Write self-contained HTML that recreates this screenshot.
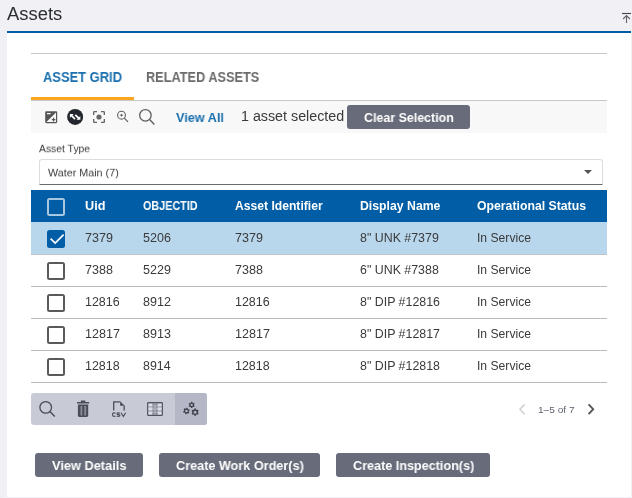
<!DOCTYPE html>
<html>
<head>
<meta charset="utf-8">
<title>Assets</title>
<style>
*{box-sizing:border-box;margin:0;padding:0}
html,body{width:632px;height:498px;overflow:hidden}
body{background:#f1f0f5;font-family:"Liberation Sans",sans-serif;color:#333;position:relative}
.a{position:absolute;white-space:nowrap}
.t{position:absolute;white-space:nowrap;line-height:20px;transform-origin:0 0;will-change:transform}
.b{font-weight:bold}
.blue{left:7px;top:31px;width:624px;height:2px;background:#005da6}
.panel{left:7px;top:33px;width:624px;height:464px;background:#fff}
.hr1{left:31px;top:53px;width:576px;height:1px;background:#c8c8c8}
.orange{left:31px;top:97px;width:103px;height:3px;background:#f8a521}
.hr2{left:31px;top:100px;width:576px;height:1px;background:#c8c8c8}
.tbar{left:31px;top:101px;width:576px;height:32px;background:#f8f8f8}
.btn{background:#686c7a;height:24px;border-radius:3px}
.select{left:39px;top:159px;width:564px;height:26px;border:1px solid #dcdcdc;border-bottom:1px solid #6b6b6b;border-radius:3px 3px 1px 1px;background:#fff}
.thead{left:31px;top:190px;width:576px;height:32px;background:#005da6}
.row{left:31px;width:576px;height:1px;background:#b9b9b9}
.rsel{left:31px;top:222px;width:576px;height:32px;background:#b8d6ec}
.cb{width:18px;height:18px;border:2px solid #5a5a5a;border-radius:2.5px;background:#fff;left:47px}
.tools{left:31px;top:393px;width:176px;height:32px;background:#c8cad6;border-radius:3px}
.tools2{left:175px;top:393px;width:32px;height:32px;background:#b5b7c6;border-radius:0 3px 3px 0}

</style>
</head>
<body>
<div class="a blue"></div>
<div class="a panel"></div>
<div class="a hr1"></div>
<div class="a hr2"></div>
<div class="a orange"></div>
<div class="a tbar"></div>
<svg class="a" style="left:618px;top:10px" width="14" height="16" viewBox="618 10 14 16"><path d="M622 13.5H631" stroke="#444" stroke-width="1.1" fill="none"/><path d="M626.5 23V15.6M623.1 19L626.5 15.6L629.9 19" stroke="#666" stroke-width="1.1" fill="none"/></svg>
<div class="a btn" style="left:347px;top:105px;width:123px"></div>
<div class="a btn" style="left:35px;top:453px;width:108px"></div>
<div class="a btn" style="left:159px;top:453px;width:161px"></div>
<div class="a btn" style="left:336px;top:453px;width:154px"></div>
<div class="a select"></div>
<svg class="a" style="left:582px;top:168px" width="12" height="8" viewBox="582 168 12 8"><path d="M584 170H592L588 174Z" fill="#555"/></svg>
<div class="a thead"></div>
<div class="a rsel"></div>
<div class="a row" style="top:254px;background:#c5c3c5"></div>
<div class="a row" style="top:286px;background:#bbbbbb"></div>
<div class="a row" style="top:318px;background:#bbbbbb"></div>
<div class="a row" style="top:350px;background:#bbbbbb"></div>
<div class="a row" style="top:382px;background:#bbbbbb"></div>
<div class="a cb" style="top:198px;border-color:#a8c8e2;background:transparent"></div>
<div class="a cb" style="top:230px;background:#005da6;border-color:#005da6"></div>
<svg class="a" style="left:47px;top:230px" width="18" height="18" viewBox="0 0 18 18"><path d="M3.6 8.6L8.2 13.1L16.6 4.6" stroke="#fff" stroke-width="1.65" fill="none"/></svg>
<div class="a cb" style="top:262px"></div>
<div class="a cb" style="top:294px"></div>
<div class="a cb" style="top:326px"></div>
<div class="a cb" style="top:358px"></div>
<div class="a tools"></div>
<div class="a tools2"></div>
<svg class="a" style="left:43.8px;top:109.8px" width="14.4" height="14.4" viewBox="0 0 24 24"><path fill="#555" d="M15 17v2h2v-2h2v-2h-2v-2h-2v2h-2v2h2zm5-15H4c-1.1 0-2 .9-2 2v16c0 1.1.9 2 2 2h16c1.1 0 2-.9 2-2V4c0-1.1-.9-2-2-2zM5 5h6v2H5V5zm15 15H4L20 4v16z"/></svg>
<svg class="a" style="left:66px;top:108px" width="18" height="18" viewBox="66 108 18 18"><circle cx="75.15" cy="116.9" r="8" fill="#23272d"/><path d="M69.9 114.1H73.7L72.5 115.3L75.6 118.4L74.3 119.7L71.2 116.6L69.9 117.9Z" fill="#fff"/><path d="M80.3 119.8H76.5L77.7 118.6L74.6 115.5L75.9 114.2L79 117.3L80.3 116Z" fill="#fff"/></svg>
<svg class="a" style="left:91.2px;top:109px" width="16" height="16" viewBox="0 0 24 24"><path fill="#666" d="M5 15H3v4c0 1.100.9 2 2 2h4v-2H5v-4zM5 5h4V3H5c-1.100 0-2 .9-2 2v4h2V5zm14-2h-4v2h4v4h2V5c0-1.100-.9-2-2-2zm0 16h-4v2h4c1.100 0 2-.9 2-2v-4h-2v4zM12 9c-1.660 0-3 1.340-3 3s1.340 3 3 3 3-1.340 3-3-1.340-3-3-3z"/><circle cx="12" cy="12" r="3.900" fill="#666"/></svg>
<svg class="a" style="left:114px;top:108px" width="44" height="20" viewBox="114 108 44 20"><circle cx="121.5" cy="115.2" r="3.9" stroke="#606060" stroke-width="1.1" fill="none"/><path d="M124.4 118.1L128 121.8" stroke="#606060" stroke-width="1.2" fill="none"/><path d="M119.9 115.2H123.1M121.5 113.8V116.6" stroke="#606060" stroke-width="0.9" fill="none"/><circle cx="145.4" cy="115.3" r="5.75" stroke="#5e5e5e" stroke-width="1.3" fill="none"/><path d="M149.6 119.5L154.4 124.4" stroke="#5e5e5e" stroke-width="1.4" fill="none"/></svg>
<svg class="a" style="left:31px;top:393px" width="176" height="32" viewBox="31 393 176 32">
<circle cx="45.7" cy="407.4" r="5.8" stroke="#4a4d57" stroke-width="1.3" fill="none"/><path d="M49.9 411.6L54.8 416.6" stroke="#4a4d57" stroke-width="1.4" fill="none"/>
<path d="M77 401.9H89.2V403.4H77Z M80.9 400.6H85.3V402H80.9Z" fill="#4a4d57"/><path d="M77.9 404.6H88.2V415.6Q88.200 417 86.800 417H79.300Q77.900 417 77.900 415.600Z" fill="#4a4d57"/><path d="M80.500 405.900h1.800v9.600h-1.800zM84.300 405.900h1.800v9.600h-1.800z" fill="#8b8d99"/>
<path d="M113.700 410.600V401.800H120.200M124.150 410.600V405.700" stroke="#4a4d57" stroke-width="1.3" fill="none"/><path d="M120.100 401.200L124.800 405.800H120.100Z" fill="#4a4d57"/>
<path fill="none" stroke="#4a4d57" stroke-width="1.1" d="M115.600 413.300Q114.900 412.850 114 412.850Q112.450 412.850 112.450 414.600Q112.450 416.350 114 416.350Q114.900 416.350 115.600 415.900M119.900 413.250Q119.200 412.850 118.400 412.850Q117 412.850 117 413.700Q117 414.400 118.400 414.600Q119.900 414.800 119.900 415.500Q119.900 416.350 118.400 416.350Q117.400 416.350 116.800 415.850M121 412.800L123.350 416.400L125.700 412.800"/>
<rect x="147.650" y="402.550" width="14.700" height="12.900" rx="0.700" fill="#a6a8b3" stroke="#50535d" stroke-width="1.150"/>
<path d="M148.500 403.700H152.300V406.200H148.500ZM148.500 407.600H152.300V410.300H148.500ZM148.500 411.700H152.300V414.400H148.500ZM157.700 403.700H161.500V406.200H157.700ZM157.700 407.600H161.500V410.300H157.700ZM157.700 411.700H161.500V414.400H157.700Z" fill="#dcdde6"/>
<path d="M152.700 403.900h1v1.100h-1zM156.300 403.900h1v1.100h-1zM152.700 406.500h1v1.100h-1zM156.300 406.500h1v1.100h-1zM152.700 410.300h1v1.100h-1zM156.300 410.300h1v1.100h-1zM152.700 413.100h1v1.100h-1zM156.300 413.100h1v1.100h-1z" fill="#676a76"/>
<path fill-rule="evenodd" fill="#3c3f48" d="M192.34 407.93L191.06 407.93L190.94 407.07L190.20 406.64L189.40 406.97L188.75 405.86L189.44 405.33L189.44 404.47L188.75 403.94L189.40 402.83L190.20 403.16L190.94 402.73L191.06 401.87L192.34 401.87L192.46 402.73L193.20 403.16L194.00 402.83L194.65 403.94L193.96 404.47L193.96 405.33L194.65 405.86L194.00 406.97L193.20 406.64L192.46 407.07ZM190.55 404.90a1.15 1.15 0 1 0 2.3 0a1.15 1.15 0 1 0 -2.3 0ZM186.43 414.30L185.09 414.03L185.15 413.11L184.46 412.50L183.56 412.68L183.12 411.38L183.95 410.97L184.13 410.07L183.53 409.38L184.44 408.35L185.20 408.86L186.07 408.57L186.37 407.70L187.71 407.97L187.65 408.89L188.34 409.50L189.24 409.32L189.68 410.62L188.85 411.03L188.67 411.93L189.27 412.62L188.36 413.65L187.60 413.14L186.73 413.43ZM185.10 411.00a1.3 1.3 0 1 0 2.6 0a1.3 1.3 0 1 0 -2.6 0ZM195.87 415.82L194.33 415.82L194.18 414.84L193.27 414.32L192.35 414.68L191.58 413.34L192.35 412.72L192.35 411.68L191.58 411.06L192.35 409.72L193.27 410.08L194.18 409.56L194.33 408.58L195.87 408.58L196.02 409.56L196.93 410.08L197.85 409.72L198.62 411.06L197.85 411.68L197.85 412.72L198.62 413.34L197.85 414.68L196.93 414.32L196.02 414.84ZM193.60 412.20a1.5 1.5 0 1 0 3.0 0a1.5 1.5 0 1 0 -3.0 0Z"/>
</svg>

<svg class="a" style="left:516px;top:400px" width="84" height="20" viewBox="516 400 84 20"><path d="M524.6 404.4L520 409.3L524.6 414.2" stroke="#d2d2d2" stroke-width="1.6" fill="none"/><path d="M588.6 404.3L593.2 409.2L588.6 414.1" stroke="#555" stroke-width="1.9" fill="none"/></svg>
<div class="t" style="left:7.3px;top:4px;font-size:18px;color:#2b2e33;transform:scaleX(1.0224)">Assets</div>
<div class="t b" style="left:42.94px;top:67px;font-size:14px;color:#1a6fae;transform:scaleX(0.9231)">ASSET GRID</div>
<div class="t b" style="left:146.22px;top:67px;font-size:14px;color:#6b6b6b;transform:scaleX(0.9103)">RELATED ASSETS</div>
<div class="t b" style="left:176.16px;top:108px;font-size:13px;color:#1a6fae;transform:scaleX(0.975)">View All</div>
<div class="t" style="left:240.58px;top:106px;font-size:14px;color:#3a3a3a;transform:scaleX(1.0196)">1 asset selected</div>
<div class="t b" style="left:364.12px;top:108px;font-size:13px;color:#ffffff;transform:scaleX(0.9563)">Clear Selection</div>
<div class="t" style="left:39.4px;top:140px;font-size:10px;color:#3a3a3a;transform:scale(1.0367,0.94)">Asset Type</div>
<div class="t" style="left:48.3px;top:164px;font-size:10px;color:#3a3a3a;transform:scale(1.0759,0.95)">Water Main (7)</div>
<div class="t b" style="left:84.97px;top:196px;font-size:12px;color:#ffffff;transform:scaleX(1.0556)">Uid</div>
<div class="t b" style="left:143.45px;top:196px;font-size:12px;color:#ffffff;transform:scaleX(0.8987)">OBJECTID</div>
<div class="t b" style="left:234.95px;top:196px;font-size:12px;color:#ffffff;transform:scaleX(1.011)">Asset Identifier</div>
<div class="t b" style="left:359.63px;top:196px;font-size:12px;color:#ffffff;transform:scaleX(1.0219)">Display Name</div>
<div class="t b" style="left:477.09px;top:196px;font-size:12px;color:#ffffff;transform:scaleX(1.0213)">Operational Status</div>
<div class="t" style="left:538.21px;top:400px;font-size:9.6px;color:#5f6470;transform:scaleX(1.0537)">1–5 of 7</div>
<div class="t b" style="left:51.85px;top:456px;font-size:13px;color:#ffffff;transform:scaleX(0.984)">View Details</div>
<div class="t b" style="left:175.81px;top:456px;font-size:13px;color:#ffffff;transform:scaleX(0.9735)">Create Work Order(s)</div>
<div class="t b" style="left:352.51px;top:456px;font-size:13px;color:#ffffff;transform:scaleX(0.9702)">Create Inspection(s)</div>
<div class="t" style="left:85.08px;top:228px;font-size:12px;color:#3a3a3a;transform:scaleX(1.0447)">7379</div>
<div class="t" style="left:143.18px;top:228px;font-size:12px;color:#3a3a3a;transform:scaleX(1.0447)">5206</div>
<div class="t" style="left:234.78px;top:228px;font-size:12px;color:#3a3a3a;transform:scaleX(1.0447)">7379</div>
<div class="t" style="left:359.88px;top:228px;font-size:12px;color:#3a3a3a;transform:scaleX(1.0326)">8&quot; UNK #7379</div>
<div class="t" style="left:476.59px;top:228px;font-size:12px;color:#3a3a3a;transform:scaleX(1.0115)">In Service</div>
<div class="t" style="left:85.08px;top:260px;font-size:12px;color:#3a3a3a;transform:scaleX(1.0447)">7388</div>
<div class="t" style="left:143.18px;top:260px;font-size:12px;color:#3a3a3a;transform:scaleX(1.0447)">5229</div>
<div class="t" style="left:234.78px;top:260px;font-size:12px;color:#3a3a3a;transform:scaleX(1.0447)">7388</div>
<div class="t" style="left:359.88px;top:260px;font-size:12px;color:#3a3a3a;transform:scaleX(1.0326)">6&quot; UNK #7388</div>
<div class="t" style="left:476.59px;top:260px;font-size:12px;color:#3a3a3a;transform:scaleX(1.0115)">In Service</div>
<div class="t" style="left:84.82px;top:292px;font-size:12px;color:#3a3a3a;transform:scaleX(1.0388)">12816</div>
<div class="t" style="left:143.18px;top:292px;font-size:12px;color:#3a3a3a;transform:scaleX(1.0447)">8912</div>
<div class="t" style="left:234.52px;top:292px;font-size:12px;color:#3a3a3a;transform:scaleX(1.0388)">12816</div>
<div class="t" style="left:359.88px;top:292px;font-size:12px;color:#3a3a3a;transform:scaleX(1.0327)">8&quot; DIP #12816</div>
<div class="t" style="left:476.59px;top:292px;font-size:12px;color:#3a3a3a;transform:scaleX(1.0115)">In Service</div>
<div class="t" style="left:84.81px;top:324px;font-size:12px;color:#3a3a3a;transform:scaleX(1.0469)">12817</div>
<div class="t" style="left:143.18px;top:324px;font-size:12px;color:#3a3a3a;transform:scaleX(1.0447)">8913</div>
<div class="t" style="left:234.51px;top:324px;font-size:12px;color:#3a3a3a;transform:scaleX(1.0469)">12817</div>
<div class="t" style="left:359.88px;top:324px;font-size:12px;color:#3a3a3a;transform:scaleX(1.0327)">8&quot; DIP #12817</div>
<div class="t" style="left:476.59px;top:324px;font-size:12px;color:#3a3a3a;transform:scaleX(1.0115)">In Service</div>
<div class="t" style="left:84.82px;top:356px;font-size:12px;color:#3a3a3a;transform:scaleX(1.0388)">12818</div>
<div class="t" style="left:143.18px;top:356px;font-size:12px;color:#3a3a3a;transform:scaleX(1.0346)">8914</div>
<div class="t" style="left:234.52px;top:356px;font-size:12px;color:#3a3a3a;transform:scaleX(1.0388)">12818</div>
<div class="t" style="left:359.88px;top:356px;font-size:12px;color:#3a3a3a;transform:scaleX(1.0327)">8&quot; DIP #12818</div>
<div class="t" style="left:476.59px;top:356px;font-size:12px;color:#3a3a3a;transform:scaleX(1.0115)">In Service</div>
</body>
</html>
